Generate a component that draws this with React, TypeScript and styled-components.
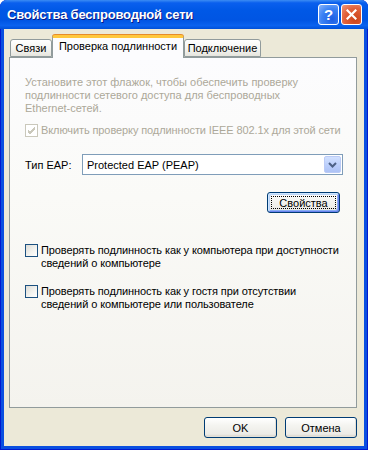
import React from 'react';
import styled, { createGlobalStyle } from 'styled-components';

const GlobalStyle = createGlobalStyle`
  html, body {
    margin: 0;
    padding: 0;
    background: #ffffff;
  }
  body {
    font-family: Tahoma, "Liberation Sans", Arial, sans-serif;
    font-size: 11px;
    color: #000;
  }
`;

const Window = styled.div`
  width: 368px;
  height: 450px;
  box-sizing: border-box;
  display: flex;
  flex-direction: column;
  background: #0a4fe0;
  border-radius: 7px 7px 0 0;
  overflow: hidden;
  box-shadow: inset 1px 0 #0019cf, inset -1px 0 #0019cf, inset 0 -1px #0019cf;
`;

const TitleBar = styled.div`
  height: 29px;
  flex: none;
  display: flex;
  align-items: center;
  padding: 0 6px 0 7px;
  background: linear-gradient(
    #3c8cf3 0%,
    #0a5fee 10%,
    #0058e6 35%,
    #0055e3 70%,
    #0a62ef 88%,
    #0050d8 100%
  );
`;

const Title = styled.div`
  flex: 1;
  color: #fff;
  font-family: "Trebuchet MS", "Liberation Sans", Arial, sans-serif;
  font-weight: bold;
  font-size: 13px;
  letter-spacing: -0.2px;
  text-shadow: 1px 1px #0a1883;
  white-space: nowrap;
`;

const CaptionButton = styled.div<{ $kind: 'help' | 'close' }>`
  width: 21px;
  height: 21px;
  box-sizing: border-box;
  margin-left: 2px;
  border: 1px solid #fff;
  border-radius: 3px;
  display: flex;
  align-items: center;
  justify-content: center;
  background: ${({ $kind }) =>
    $kind === 'close'
      ? 'radial-gradient(circle at 70% 75%, #cc4419 0%, #e1603a 55%, #f09a7c 100%)'
      : 'radial-gradient(circle at 70% 75%, #1d5ee3 0%, #3b82f4 55%, #8bb5fb 100%)'};
  color: #fff;
  font-family: "Liberation Sans", Arial, sans-serif;
  font-weight: bold;
  font-size: 15px;
`;

const Client = styled.div`
  flex: 1;
  display: flex;
  flex-direction: column;
  margin: 0 4px 4px;
  padding: 6px 7px 0 5px;
  background: #ece9d8;
`;

const TabRow = styled.div`
  height: 22px;
  display: flex;
  align-items: flex-end;
  position: relative;
  z-index: 1;
  padding-left: 1px;
`;

const Tab = styled.div<{ $active?: boolean; $w: number }>`
  position: relative;
  box-sizing: border-box;
  width: ${({ $w }) => $w}px;
  height: ${({ $active }) => ($active ? 23 : 18)}px;
  margin-bottom: ${({ $active }) => ($active ? -1 : 0)}px;
  border: 1px solid #919b9c;
  border-bottom: ${({ $active }) => ($active ? 'none' : '1px solid #919b9c')};
  border-top: ${({ $active }) => ($active ? '3px solid #ffc83c' : '1px solid #919b9c')};
  border-radius: 3px 3px 0 0;
  background: ${({ $active }) =>
    $active ? '#fcfcfe' : 'linear-gradient(#ffffff, #f3f3ef 60%, #e6e5de)'};
  display: flex;
  align-items: ${({ $active }) => ($active ? 'flex-start' : 'center')};
  justify-content: center;
  padding-top: ${({ $active }) => ($active ? 2 : 0)}px;
  white-space: nowrap;
  ${({ $active }) =>
    $active &&
    `box-shadow: 0 -1px #e68b2c;`}
`;

const Panel = styled.div`
  flex: 1;
  display: flex;
  flex-direction: column;
  border: 1px solid #919b9c;
  background: linear-gradient(#fcfcfe, #fafaf7 40%, #f4f3ee);
  padding: 18px 13px 0 15px;
`;

const Hint = styled.div`
  color: #aca899;
  line-height: 13px;
  white-space: nowrap;
`;

const CheckRow = styled.label<{ $disabled?: boolean; $top: number }>`
  display: flex;
  align-items: flex-start;
  margin-top: ${({ $top }) => $top}px;
  color: ${({ $disabled }) => ($disabled ? '#aca899' : '#000')};
  line-height: 13px;
  white-space: nowrap;
  letter-spacing: -0.1px;
`;

const Box = styled.span<{ $disabled?: boolean }>`
  flex: none;
  width: 13px;
  height: 13px;
  box-sizing: border-box;
  margin: 0 3px 0 0;
  border: 1px solid ${({ $disabled }) => ($disabled ? '#cac8bb' : '#1c5180')};
  background: ${({ $disabled }) =>
    $disabled ? '#fff' : 'linear-gradient(135deg, #dcdcd7, #f4f4f0 60%, #ffffff)'};
  display: flex;
  align-items: center;
  justify-content: center;
`;

const EapRow = styled.div`
  display: flex;
  align-items: center;
  margin-top: 17px;
`;

const EapLabel = styled.div`
  width: 57px;
  flex: none;
`;

const Combo = styled.div`
  flex: 1;
  height: 21px;
  box-sizing: border-box;
  border: 1px solid #7f9db9;
  background: #fff;
  display: flex;
  align-items: center;
  padding: 1px;
`;

const ComboText = styled.div`
  flex: 1;
  padding-left: 3px;
`;

const ComboButton = styled.div`
  width: 17px;
  height: 17px;
  box-sizing: border-box;
  border: 1px solid #bbcbf6;
  border-radius: 2px;
  background: linear-gradient(#d2e1ff, #b9cdfb 60%, #adc2f5);
  display: flex;
  align-items: center;
  justify-content: center;
`;

const ButtonBar = styled.div`
  display: flex;
  justify-content: flex-end;
  margin-top: 17px;
  padding-right: 3px;
`;

const Button = styled.button<{ $w: number; $focused?: boolean }>`
  position: relative;
  width: ${({ $w }) => $w}px;
  height: 21px;
  padding: 0;
  font-family: Tahoma, "Liberation Sans", Arial, sans-serif;
  font-size: 11px;
  color: #000;
  border: 1px solid #003c74;
  border-radius: 3px;
  background: linear-gradient(#ffffff, #f4f4f0 40%, #ecebe6 85%, #d6d0c5);
  box-shadow: ${({ $focused }) =>
    $focused
      ? 'inset 1px 1px #cee7ff, inset -1px -1px #6982ee, inset 2px 2px #bcd4f6, inset -2px -2px #89adf4'
      : 'inset -1px -1px #e3e0d7'};
  ${({ $focused }) =>
    $focused &&
    `&::after {
      content: '';
      position: absolute;
      inset: 3px;
      border: 1px dotted #000;
    }`}
`;

const Footer = styled.div`
  height: 38px;
  flex: none;
  display: flex;
  justify-content: flex-end;
  align-items: flex-start;
  gap: 8px;
  padding-top: 9px;
  box-sizing: border-box;
`;

const Check = ({ color }: { color: string }) => (
  <svg width="9" height="9" viewBox="0 0 9 9">
    <path d="M1 4 L3 6 L8 1 M1 5 L3 7 L8 2 M1 6 L3 8 L8 3" stroke={color} strokeWidth="1" fill="none" />
  </svg>
);

export default function App() {
  return (
    <>
      <GlobalStyle />
      <Window>
        <TitleBar>
          <Title>Свойства беспроводной сети</Title>
          <CaptionButton $kind="help">?</CaptionButton>
          <CaptionButton $kind="close">
            <svg width="11" height="11" viewBox="0 0 11 11">
              <path d="M1.5 1.5 L9.5 9.5 M9.5 1.5 L1.5 9.5" stroke="#fff" strokeWidth="2.2" strokeLinecap="square" />
            </svg>
          </CaptionButton>
        </TitleBar>
        <Client>
          <TabRow>
            <Tab $w={42}>Связи</Tab>
            <Tab $w={132} $active>Проверка подлинности</Tab>
            <Tab $w={77}>Подключение</Tab>
          </TabRow>
          <Panel>
            <Hint>
              Установите этот флажок, чтобы обеспечить проверку
              <br />
              подлинности сетевого доступа для беспроводных
              <br />
              Ethernet-сетей.
            </Hint>
            <CheckRow $disabled $top={9}>
              <Box $disabled>
                <Check color="#cac8bb" />
              </Box>
              Включить проверку подлинности IEEE 802.1x для этой сети
            </CheckRow>
            <EapRow>
              <EapLabel>Тип EAP:</EapLabel>
              <Combo>
                <ComboText>Protected EAP (PEAP)</ComboText>
                <ComboButton>
                  <svg width="9" height="6" viewBox="0 0 9 6">
                    <path d="M1 1 L4.5 4.5 L8 1" stroke="#4d6185" strokeWidth="2" fill="none" />
                  </svg>
                </ComboButton>
              </Combo>
            </EapRow>
            <ButtonBar>
              <Button $w={73} $focused>
                Свойства
              </Button>
            </ButtonBar>
            <CheckRow $top={31}>
              <Box />
              <span>
                Проверять подлинность как у компьютера при доступности
                <br />
                сведений о компьютере
              </span>
            </CheckRow>
            <CheckRow $top={15}>
              <Box />
              <span>
                Проверять подлинность как у гостя при отсутствии
                <br />
                сведений о компьютере или пользователе
              </span>
            </CheckRow>
          </Panel>
          <Footer>
            <Button $w={73}>OK</Button>
            <Button $w={72}>Отмена</Button>
          </Footer>
        </Client>
      </Window>
    </>
  );
}
